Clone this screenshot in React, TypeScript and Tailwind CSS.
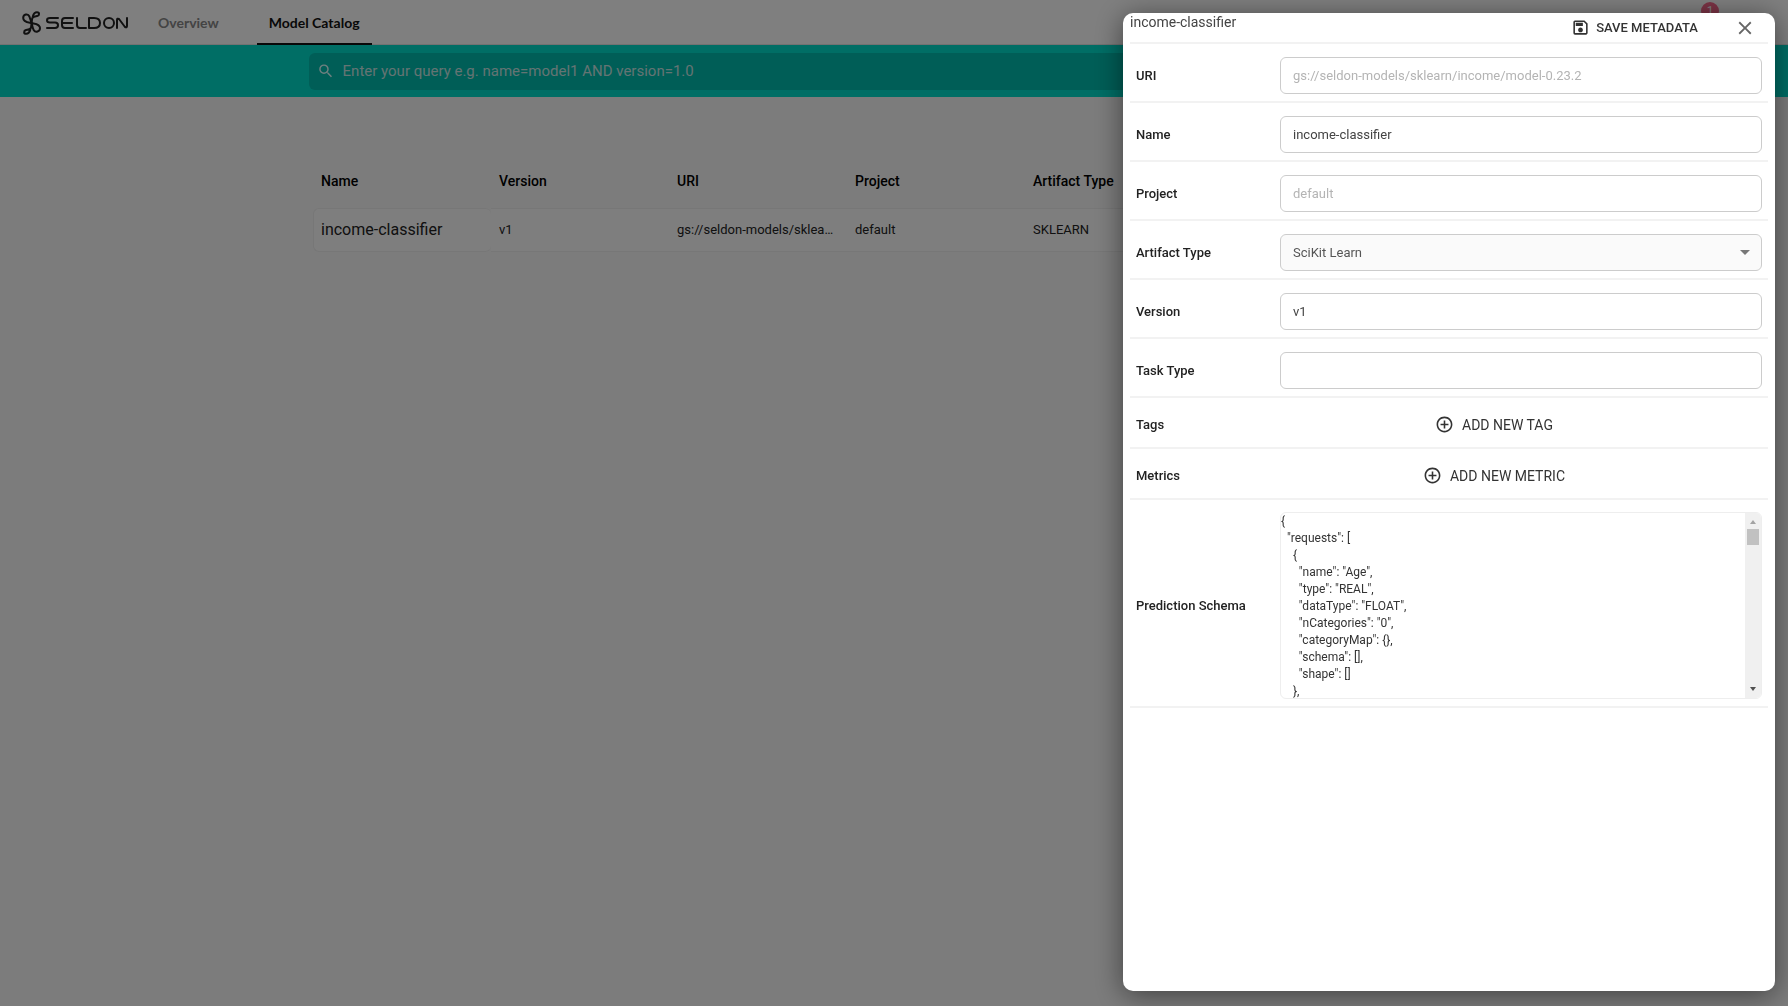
import { useState } from 'react'
import { MdOutlineSave, MdClose, MdSearch, MdAddCircleOutline } from 'react-icons/md'

interface Model {
    name: string
    version: string
    uri: string
    project: string
    artifactType: string
}

const columns = ['Name', 'Version', 'URI', 'Project', 'Artifact Type']

const models: Model[] = [
    {
        name: 'income-classifier',
        version: 'v1',
        uri: 'gs://seldon-models/sklearn/income/model-0.23.2',
        project: 'default',
        artifactType: 'SKLEARN',
    },
]

const features = ['Age', 'Workclass', 'Education', 'Marital Status', 'Occupation']

const schema = JSON.stringify(
    {
        requests: features.map((name) => ({
            name,
            type: 'REAL',
            dataType: 'FLOAT',
            nCategories: '0',
            categoryMap: {},
            schema: [],
            shape: [],
        })),
    },
    null,
    2
)

const shorten = (text: string, max = 24) =>
    text.length > max ? `${text.slice(0, max)}…` : text

const Logo = () => (
    <svg
        width="108"
        height="26"
        viewBox="0 0 108 26"
        fill="none"
        stroke="#222"
        strokeWidth="2"
        strokeLinecap="round"
        strokeLinejoin="round"
        role="img"
        aria-label="Seldon"
    >
        <path d="M10.600 13C8 12.400 2.200 12.500 2.200 8C2.200 4.200 7 3.200 8.400 6.500C9.300 9 9.700 10.500 10.600 13C11.500 16 11.500 18 12.800 20.200C14.500 23 19 21.800 19 18C19 13.800 13.500 13.800 10.600 13Z" />
        <path d="M11.800 6.400C12.500 3.800 14 2.200 16 2.200C18.800 2.200 18.600 5.400 16.200 6C14.500 6.400 12.800 6 11.200 8.200L10.600 13" />
        <path d="M9.400 19.600C8.700 22.200 7.200 23.800 5.200 23.800C2.400 23.800 2.600 20.600 5 20C6.700 19.600 8.400 20 10 17.800L10.600 13" />
        <path d="M37 8H29C25 8 25 12.500 29 12.500H34C38 12.500 38 18 34 18H26" />
        <path d="M52 8H44Q41 8 41 11V15Q41 18 44 18H52M42 13H51" />
        <path d="M56 8V15Q56 18 59 18H65" />
        <path d="M68 8H73Q79 8 79 13T73 18H68Z" />
        <ellipse cx="88" cy="13" rx="5" ry="5" />
        <path d="M96 18V10Q96 8 98 9L104 17Q106 18 106 16V8" />
    </svg>
)

const Header = () => (
    <header className="flex h-[45px] items-center bg-white shadow-[inset_0_-1px_0_#e4e4e4]">
        <a href="#" className="ml-[21px] mr-[29px]">
            <Logo />
        </a>
        <nav className="flex h-full font-[Lato,sans-serif] text-sm font-bold">
            <a href="#overview" className="flex items-center text-[#888]">
                Overview
            </a>
            <a
                href="#catalog"
                className="ml-[38px] flex items-center border-y-2 border-t-transparent border-b-[#111] px-3 text-[#111]"
            >
                Model Catalog
            </a>
        </nav>
        <span className="mr-[69px] mb-6 ml-auto flex size-[18px] items-center justify-center rounded-full bg-[#f8688c] text-xs text-white">
            1
        </span>
    </header>
)

const SearchBar = () => (
    <div className="flex h-[52px] items-center bg-[#00dccb] px-[309px]">
        <label className="flex h-[37px] flex-1 items-center gap-2 rounded-md bg-[#00bcae] px-2 text-[#dff]">
            <MdSearch className="size-[18px]" />
            <input
                type="search"
                aria-label="Search models"
                placeholder="Enter your query e.g. name=model1 AND version=1.0"
                className="w-full bg-transparent text-[15px] outline-none placeholder:text-[#c8e8e6]"
            />
        </label>
    </div>
)

const ModelTable = () => (
    <main className="px-[313px] pt-16">
        <table className="w-full table-fixed border-separate border-spacing-0 text-left">
            <colgroup>
                {columns.map((column) => (
                    <col key={column} className="w-[178px]" />
                ))}
                <col />
            </colgroup>
            <thead>
                <tr className="h-[47px] align-top text-sm">
                    {columns.map((column) => (
                        <th key={column} className="px-2 pt-2.5 font-medium text-black">
                            {column}
                        </th>
                    ))}
                    <td />
                </tr>
            </thead>
            <tbody>
                {models.map((model) => (
                    <tr
                        key={model.name}
                        className="h-11 text-[13px] text-[#222] [&>td]:border-y [&>td]:border-[#eee] [&>td]:bg-[#fdfdfd]"
                    >
                        <td className="rounded-md border-l px-[7px] text-base">{model.name}</td>
                        <td className="px-2">{model.version}</td>
                        <td className="px-2 whitespace-nowrap" title={model.uri}>
                            {shorten(model.uri)}
                        </td>
                        <td className="px-2">{model.project}</td>
                        <td className="px-2">{model.artifactType}</td>
                        <td />
                    </tr>
                ))}
            </tbody>
        </table>
    </main>
)

const rowClass = 'flex items-center border-b-2 border-[#f2f2f2] px-1.5'
const labelClass = 'w-36 shrink-0 text-[13px] font-medium text-[#222]'
const inputClass =
    'h-[37px] w-full rounded-md border border-[#ccc] bg-white px-3 text-[13px] text-[#444] outline-none disabled:text-[#b4b4b4]'

interface FieldProps {
    id: string
    label: string
    defaultValue?: string
    disabled?: boolean
}

const Field = ({ id, label, defaultValue = '', disabled }: FieldProps) => (
    <div className={`${rowClass} pt-[13px] pb-[7px]`}>
        <label htmlFor={id} className={labelClass}>
            {label}
        </label>
        <input id={id} className={inputClass} defaultValue={defaultValue} disabled={disabled} />
    </div>
)

const AddRow = ({ label, action }: { label: string; action: string }) => (
    <div className={`${rowClass} pt-3 pb-2`}>
        <span className={labelClass}>{label}</span>
        <div className="flex h-[29px] flex-1 items-center justify-center pr-[54px]">
            <button type="button" className="flex items-center gap-2 text-sm text-[#333]">
                <MdAddCircleOutline className="size-[19px]" />
                {action}
            </button>
        </div>
    </div>
)

const MetadataPanel = ({ onClose }: { onClose: () => void }) => (
    <div
        role="dialog"
        aria-label="income-classifier"
        className="fixed top-[13px] right-[13px] bottom-[15px] w-[652px] overflow-auto rounded-[10px] bg-white px-[7px] shadow-[0_4px_28px_rgba(0,0,0,0.5)]"
    >
        <div className="flex h-[31px] justify-between border-b-2 border-[#f2f2f2]">
            <h2 className="text-sm leading-[18px] text-[#444]">income-classifier</h2>
            <div className="flex items-center pr-3">
                <button
                    type="button"
                    className="mr-9 flex items-center gap-1.5 text-[13px] font-medium text-[#333]"
                >
                    <MdOutlineSave className="size-[19px]" />
                    SAVE METADATA
                </button>
                <button type="button" aria-label="Close" onClick={onClose}>
                    <MdClose className="size-[22px] text-[#666]" />
                </button>
            </div>
        </div>
        <Field id="uri" label="URI" defaultValue={models[0].uri} disabled />
        <Field id="name" label="Name" defaultValue="income-classifier" />
        <Field id="project" label="Project" defaultValue="default" disabled />
        <div className={`${rowClass} pt-[13px] pb-[7px]`}>
            <label htmlFor="artifact" className={labelClass}>
                Artifact Type
            </label>
            <div className="relative w-full">
                <select
                    id="artifact"
                    className="h-[37px] w-full appearance-none rounded-md border border-[#ccc] bg-[#fafafa] px-3 text-[13px] text-[#555]"
                >
                    <option>SciKit Learn</option>
                </select>
                <span className="pointer-events-none absolute top-4 right-3 border-x-[5px] border-t-[5px] border-x-transparent border-t-[#777]" />
            </div>
        </div>
        <Field id="version" label="Version" defaultValue="v1" />
        <Field id="task" label="Task Type" />
        <AddRow label="Tags" action="ADD NEW TAG" />
        <AddRow label="Metrics" action="ADD NEW METRIC" />
        <div className={`${rowClass} pt-3 pb-[7px]`}>
            <label htmlFor="schema" className={labelClass}>
                Prediction Schema
            </label>
            <div className="flex h-[187px] flex-1 overflow-hidden rounded-md border border-[#eee]">
                <textarea
                    id="schema"
                    defaultValue={schema}
                    className="flex-1 resize-none text-xs leading-[17px] text-[#333] outline-none [scrollbar-width:none]"
                />
                <div
                    aria-hidden="true"
                    className="flex w-4 flex-col items-center bg-[#f0f0f0] py-[7px]"
                >
                    <span className="border-x-[3px] border-b-[4px] border-x-transparent border-b-[#a3a3a3]" />
                    <span className="mt-[5px] h-4 w-3 bg-[#c1c1c1]" />
                    <span className="mt-auto border-x-[3px] border-t-[4px] border-x-transparent border-t-[#505050]" />
                </div>
            </div>
        </div>
    </div>
)

export default function App() {
    const [open, setOpen] = useState(true)

    return (
        <div className="min-h-screen bg-[#f9f9f9] font-[Roboto,sans-serif]">
            <Header />
            <SearchBar />
            <ModelTable />
            {open && (
                <div className="fixed inset-0 bg-black/50">
                    <MetadataPanel onClose={() => setOpen(false)} />
                </div>
            )}
        </div>
    )
}
